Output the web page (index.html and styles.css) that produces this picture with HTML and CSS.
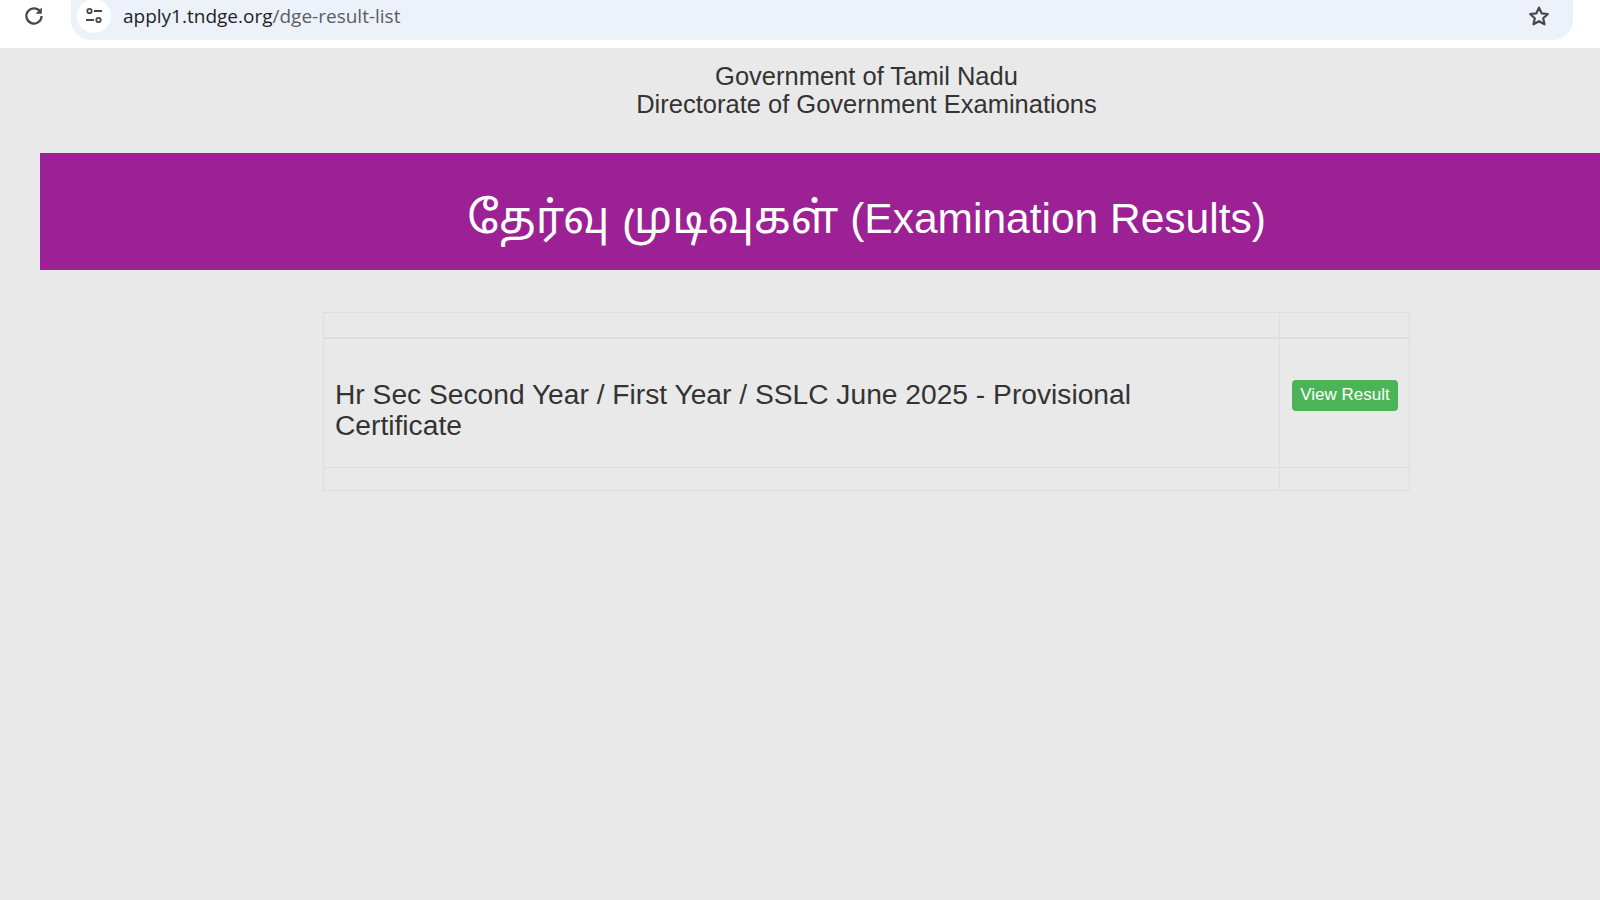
FILE: index.html
```html
<!DOCTYPE html>
<html lang="ta">
<head>
  <meta charset="UTF-8">
  <title>Examination Results</title>
  <link rel="stylesheet" href="styles.css">
</head>
<body>
  <div class="toolbar">
    <svg class="reload" viewBox="0 0 24 24" width="24" height="24">
      <path d="M18.6 8.2A7.6 7.6 0 1 0 19.6 12" fill="none" stroke="#474747" stroke-width="2.2"/>
      <path d="M19.8 3.6v6.2h-6.2z" fill="#474747"/>
    </svg>
    <div class="omnibox">
      <span class="site-icon">
        <svg viewBox="0 0 20 20" width="20" height="20">
          <circle cx="5.5" cy="5" r="2.2" fill="none" stroke="#474747" stroke-width="1.8"/>
          <path d="M10 5h8M2 14h8" stroke="#474747" stroke-width="2"/>
          <circle cx="14.5" cy="14" r="2.2" fill="none" stroke="#474747" stroke-width="1.8"/>
        </svg>
      </span>
      <span class="url">apply1.tndge.org<span class="url-path">/dge-result-list</span></span>
      <svg class="star" viewBox="0 0 24 24" width="24" height="24">
        <path d="M12 3.6l2.6 5.7 6.2.7-4.6 4.2 1.3 6.1L12 17.2l-5.5 3.1 1.3-6.1L3.2 10l6.2-.7z" fill="none" stroke="#474747" stroke-width="2.2" stroke-linejoin="round"/>
      </svg>
    </div>
  </div>

  <div class="page">
    <div class="org">
      <div>Government of Tamil Nadu</div>
      <div>Directorate of Government Examinations</div>
    </div>
    <h1 class="banner"><span class="tamil">தேர்வு முடிவுகள்</span> (Examination Results)</h1>
    <table class="results">
      <colgroup>
        <col class="col-name">
        <col class="col-action">
      </colgroup>
      <tr class="thin-top"><td></td><td></td></tr>
      <tr class="main-row">
        <td class="exam-name">Hr Sec Second Year / First Year / SSLC June 2025 - Provisional Certificate</td>
        <td class="action"><a class="btn" href="#">View Result</a></td>
      </tr>
      <tr class="thin-bottom"><td></td><td></td></tr>
    </table>
  </div>
</body>
</html>
```

FILE: styles.css
```css
html, body {
  margin: 0;
  height: 100%;
  overflow: hidden;
}

body {
  background: #e9e9e9;
  color: #333;
  font-family: "Liberation Sans", Arial, "Noto Sans Tamil", "Noto Sans", sans-serif;
}

.toolbar {
  display: flex;
  align-items: flex-start;
  height: 48px;
  background: #fff;
}

.reload {
  margin: 4px 0 0 22px;
}

.omnibox {
  display: flex;
  align-items: center;
  width: 1502px;
  height: 40px;
  margin-left: 25px;
  padding: 0 22px 0 6px;
  box-sizing: border-box;
  background: #edf2fa;
  border-radius: 0 0 20px 20px;
}

.site-icon {
  display: flex;
  align-items: center;
  justify-content: center;
  width: 34px;
  height: 34px;
  margin-top: -8px;
  background: #fff;
  border-radius: 50%;
}

.url {
  flex: 1;
  margin: -9px 0 0 12px;
  font-family: "Open Sans", "Noto Sans", sans-serif;
  font-size: 19px;
  color: #1f1f1f;
}

.url-path {
  color: #5a5d61;
}

.star {
  margin-top: -9px;
}

.page {
  width: 1733px;
}

.org {
  padding-top: 14px;
  font-size: 25.5px;
  line-height: 28px;
  text-align: center;
}

.banner {
  height: 117px;
  margin: 35px 40px 0;
  padding-top: 41px;
  box-sizing: border-box;
  background: #9c2194;
  color: #fff;
  font-size: 42.5px;
  font-weight: normal;
  line-height: 48px;
  text-align: center;
}

.tamil {
  font-size: 44.5px;
}

.results {
  width: 1087px;
  margin: 42px auto 0;
  border-collapse: collapse;
  table-layout: fixed;
}

.col-action {
  width: 130px;
}

.results td {
  padding: 0;
  border: 1px solid #dedede;
}

.thin-top td {
  height: 24px;
  border-bottom-width: 2px;
}

.thin-bottom td {
  height: 22px;
}

.results .exam-name {
  height: 114px;
  padding: 14px 130px 0 11px;
  font-size: 28.2px;
  line-height: 31px;
}

.results .action {
  padding: 0 0 15px 12px;
}

.btn {
  display: block;
  width: 106px;
  height: 31px;
  background: #4cb458;
  border-radius: 4px;
  color: #fff;
  font-size: 17px;
  line-height: 30px;
  text-align: center;
  text-decoration: none;
}
```
